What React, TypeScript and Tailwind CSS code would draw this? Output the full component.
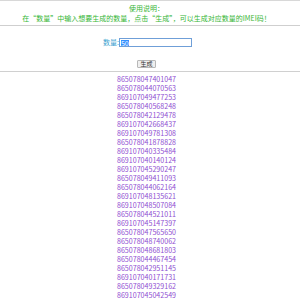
import React from "react";

const nums = [
  "865078047401047",
  "865078044070563",
  "869107049477253",
  "865078040568248",
  "865078042129478",
  "869107042668437",
  "869107049781308",
  "865078041878828",
  "869107040335484",
  "869107040140124",
  "869107045290247",
  "865078049411093",
  "865078044062164",
  "869107048135621",
  "869107048507084",
  "865078044521011",
  "869107045147397",
  "865078047565650",
  "865078048740062",
  "865078048681803",
  "865078044467454",
  "865078042951145",
  "869107040171731",
  "865078049329162",
  "869107045042549",
];

export default function App() {
  return (
    <div
      className="w-[300px] h-[300px] overflow-hidden bg-white border-t border-[#d8d8d8]"
      style={{ fontFamily: '"Noto Sans CJK SC", "Noto Sans", sans-serif' }}
    >
      <div className="pt-[2px] pb-[2px] border-b border-[#cfcfcf]">
        <div className="w-[293px] text-center text-[7px] leading-[10px] text-[#36b636]">
          <div>使用说明：</div>
          <div>在“数量”中输入想要生成的数量，点击“生成”，可以生成对应数量的IMEI码！</div>
        </div>
      </div>
      <div className="w-[293px] flex flex-col items-center pt-[12px]">
        <div className="flex items-center h-[9px] ml-[2px]">
          <span className="text-[7px] leading-[9px] text-[#3a9fcf]">数量:</span>
          <div className="w-[73px] h-[9px] border border-[#6f9fd8] bg-white flex items-center pl-[1px]">
            <span className="text-[7px] leading-[6px] bg-[#3390ff] text-white">50</span>
          </div>
        </div>
        <div className="mt-[13px] w-[19px] h-[8px] border border-[#b8b8b8] bg-[#efefef] rounded-[1px] flex items-center justify-center text-[6px] leading-[6px] text-[#333]">
          生成
        </div>
      </div>
      <div className="mt-[3px] border-t border-[#d0d0d0]" />
      <div className="w-[293px] pt-[3px] flex flex-col items-center text-[7.1px] leading-[9px] text-[#8f4fd2]">
        {nums.map((n, i) => (
          <div key={i}>{n}</div>
        ))}
      </div>
    </div>
  );
}
